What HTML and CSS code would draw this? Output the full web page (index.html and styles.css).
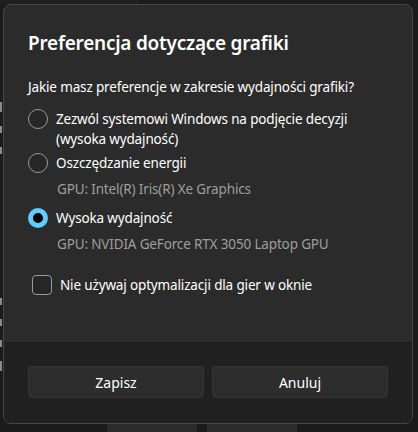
FILE: index.html
```html
<!DOCTYPE html>
<html lang="pl">
<head>
<meta charset="utf-8">
<title>Preferencja dotyczące grafiki</title>
<link rel="stylesheet" href="styles.css">
</head>
<body>
<div class="backdrop">
  <div class="bg-tab"></div>
  <div class="bg-marks">
    <span class="mark tall"></span>
    <span class="mark"></span>
    <span class="mark"></span>
    <span class="mark gap"></span>
    <span class="mark"></span>
    <span class="mark"></span>
    <span class="mark tall"></span>
  </div>
  <div class="bg-actions">
    <span class="bg-btn">Opcje</span>
    <span class="bg-btn muted">Resetuj</span>
  </div>
</div>

<div class="dialog">
  <div class="dialog-body">
    <h1 class="title">Preferencja dotyczące grafiki</h1>
    <p class="question">Jakie masz preferencje w zakresie wydajności grafiki?</p>

    <div class="option">
      <span class="radio"></span>
      <span class="label">Zezwól systemowi Windows na podjęcie decyzji<br>(wysoka wydajność)</span>
    </div>
    <div class="option">
      <span class="radio"></span>
      <span class="label">Oszczędzanie energii</span>
    </div>
    <div class="gpu">GPU: Intel(R) Iris(R) Xe Graphics</div>
    <div class="option selected">
      <span class="radio"></span>
      <span class="label">Wysoka wydajność</span>
    </div>
    <div class="gpu">GPU: NVIDIA GeForce RTX 3050 Laptop GPU</div>

    <div class="check">
      <span class="box"></span>
      <span class="label">Nie używaj optymalizacji dla gier w oknie</span>
    </div>
  </div>
  <div class="dialog-footer">
    <button class="btn">Zapisz</button>
    <button class="btn">Anuluj</button>
  </div>
</div>
</body>
</html>
```

FILE: styles.css
```css
html, body { margin: 0; padding: 0; }
body { background: #1b1b1b; color: #fff; font-family: "Noto Sans", "Open Sans", sans-serif; font-size: 13.5px; letter-spacing: -0.15px; overflow: hidden; }

.backdrop { height: 432px; display: flex; flex-direction: column; overflow: hidden; }
.bg-tab { width: 139px; height: 4px; background: #202020; flex: none; }
.bg-marks { margin-top: 98px; display: flex; flex-direction: column; gap: 14px; }
.mark { display: block; width: 2px; height: 7px; background: #8a8a8a; }
.mark.tall { height: 10px; }
.mark.gap { margin-top: 130px; }
.bg-actions { margin-top: auto; margin-bottom: -22px; padding-left: 107px; display: flex; gap: 10px; }
.bg-btn { width: 90px; height: 30px; line-height: 28px; text-align: center; background: #2b2b2b; border-top: 1px solid #3a3a3a; color: #fff; }
.bg-btn.muted { color: #7a7a7a; }

.dialog { position: absolute; left: 3px; top: 4px; width: 410px; height: 420px; box-sizing: border-box; border: 1px solid #474747; border-radius: 8px; background: #2b2b2b; display: flex; flex-direction: column; overflow: hidden; }
.dialog-body { flex: 1; padding: 24px 24px 0 24px; }
.title { margin: 0; font-size: 19px; letter-spacing: -0.25px; line-height: 28px; font-weight: 600; }
.question { margin: 20px 0 12px 0; line-height: 20px; }

.option { display: flex; gap: 8px; line-height: 20px; }
.option + .option { margin-top: 4px; }
.gpu { margin: 6px 0 0 29px; line-height: 20px; color: #9e9e9e; }
.gpu + .option { margin-top: 9px; }
.radio { flex: none; width: 20px; height: 20px; box-sizing: border-box; border: 1px solid #9a9a9a; border-radius: 50%; background: #272727; }
.option.selected .radio { border: 5px solid #60cdff; background: #000; }

.check { display: flex; gap: 8px; align-items: center; margin: 21px 0 0 4px; line-height: 20px; }
.box { flex: none; width: 20px; height: 20px; box-sizing: border-box; border: 1px solid #9a9a9a; border-radius: 4px; background: #262626; }

.dialog-footer { flex: none; height: 81px; box-sizing: border-box; padding: 24px; background: #202020; display: flex; gap: 8px; }
.btn { flex: 1; height: 32px; border: 1px solid #353535; border-radius: 4px; background: #2d2d2d; color: #fff; font: inherit; font-size: 14px; }
```
